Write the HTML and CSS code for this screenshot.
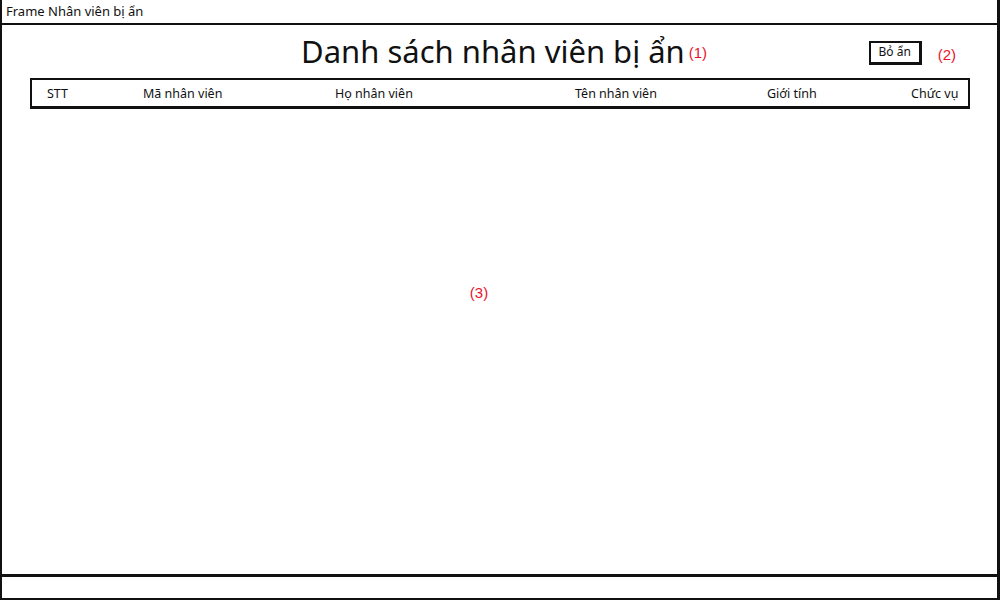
FILE: index.html
```html
<!DOCTYPE html>
<html lang="vi">
<head>
<meta charset="utf-8">
<title>Frame Nhân viên bị ẩn</title>
<link rel="stylesheet" href="styles.css">
</head>
<body>
<div class="frame">
  <div class="titlebar">Frame Nhân viên bị ẩn</div>
  <div class="content">
    <div class="header">
      <h1 class="title">Danh sách nhân viên bị ẩn</h1>
      <span class="note note-1">(1)</span>
      <button class="btn">Bỏ ẩn</button>
      <span class="note note-2">(2)</span>
    </div>
    <div class="table-head">
      <span>STT</span>
      <span>Mã nhân viên</span>
      <span>Họ nhân viên</span>
      <span>Tên nhân viên</span>
      <span>Giới tính</span>
      <span>Chức vụ</span>
    </div>
    <div class="body-area">
      <span class="note">(3)</span>
    </div>
  </div>
  <div class="statusbar"></div>
</div>
</body>
</html>
```
FILE: styles.css
```css
* { box-sizing: border-box; }
html, body { margin: 0; padding: 0; background: #fff; }
body { font-family: "Noto Sans", "DejaVu Sans", sans-serif; color: #111; }
.frame {
  width: 1000px;
  height: 600px;
  border-left: 2px solid #111;
  border-right: 3px solid #111;
  border-bottom: 2px solid #111;
  display: flex;
  flex-direction: column;
}
.titlebar {
  height: 25px;
  border-bottom: 2px solid #111;
  font-size: 13px;
  line-height: 23px;
  padding-left: 4px;
}
.content {
  flex: 1;
  display: flex;
  flex-direction: column;
  padding: 0 27px 0 28px;
}
.header {
  display: flex;
  align-items: center;
  height: 53px;
  padding-left: 271px;
}
.title {
  margin: 0;
  font-weight: 400;
  font-size: 31px;
  line-height: 40px;
  margin-top: -2px;
}
.note {
  color: #e8152a;
  font-family: "Liberation Sans", Arial, sans-serif;
  font-size: 15px;
}
.note-1 { margin-left: 4px; margin-top: 2px; }
.btn {
  margin-left: auto;
  width: 53px;
  height: 24px;
  margin-top: 2px;
  background: #fff;
  border: 2px solid #111;
  border-right-width: 3px;
  border-bottom-width: 3px;
  font-family: inherit;
  font-size: 12px;
  color: #111;
  padding: 0;
  line-height: 16px;
}
.note-2 { margin-left: 16px; margin-right: 14px; margin-top: 6px; }
.table-head {
  height: 31px;
  border: 2px solid #111;
  border-bottom-width: 3px;
  display: grid;
  grid-template-columns: 96px 192px 240px 192px 144px 1fr;
  align-items: center;
  padding-left: 15px;
  font-size: 12.5px;
}
.body-area {
  flex: 1;
  display: flex;
  justify-content: center;
  align-items: center;
  padding-bottom: 98px;
  padding-right: 42px;
}
.statusbar {
  height: 24px;
  border-top: 3px solid #111;
}
```
